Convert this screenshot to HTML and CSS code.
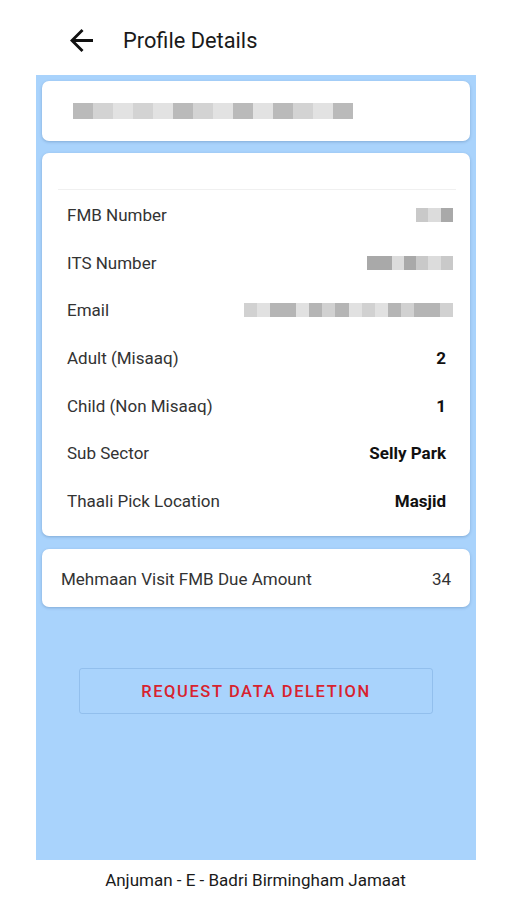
FILE: index.html
```html
<!DOCTYPE html>
<html lang="en">
  <head>
    <meta charset="UTF-8" />
    <meta name="viewport" content="width=device-width, initial-scale=1.0" />
    <title>Profile Details</title>
    <link rel="stylesheet" href="styles.css">
  </head>
  <body>
    <header class="topbar">
      <svg class="back" viewBox="4 4 16 16">
        <path d="M20 11H7.83l5.59-5.59L12 4l-8 8 8 8 1.41-1.41L7.83 13H20v-2z" fill="#111" />
      </svg>
      <h1>Profile Details</h1>
    </header>

    <main class="panel">
      <div class="card name-card">
        <div class="blur blur-name">
          <span class="p2"></span><span class="p1"></span><span class="p3"></span><span class="p1"></span><span class="p3"></span><span class="p2"></span><span class="p1"></span><span class="p3"></span><span class="p2"></span><span class="p3"></span><span class="p2"></span><span class="p1"></span><span class="p3"></span><span class="p2"></span>
        </div>
      </div>

      <div class="card details">
        <div class="divider"></div>
        <div class="rows">
          <div class="row">
            <span class="label">FMB Number</span>
            <div class="blur blur-fmb"><span class="p1"></span><span class="p3"></span><span class="p2"></span></div>
          </div>
          <div class="row">
            <span class="label">ITS Number</span>
            <div class="blur blur-its"><span class="p2"></span><span class="p2"></span><span class="p3"></span><span class="p2"></span><span class="p1"></span><span class="p3"></span><span class="p1"></span></div>
          </div>
          <div class="row">
            <span class="label">Email</span>
            <div class="blur blur-email"><span class="p1"></span><span class="p3"></span><span class="p2"></span><span class="p2"></span><span class="p3"></span><span class="p2"></span><span class="p1"></span><span class="p2"></span><span class="p3"></span><span class="p1"></span><span class="p3"></span><span class="p2"></span><span class="p1"></span><span class="p2"></span><span class="p2"></span><span class="p1"></span></div>
          </div>
          <div class="row">
            <span class="label">Adult (Misaaq)</span>
            <span class="value">2</span>
          </div>
          <div class="row">
            <span class="label">Child (Non Misaaq)</span>
            <span class="value">1</span>
          </div>
          <div class="row">
            <span class="label">Sub Sector</span>
            <span class="value">Selly Park</span>
          </div>
          <div class="row">
            <span class="label">Thaali Pick Location</span>
            <span class="value">Masjid</span>
          </div>
        </div>
      </div>

      <div class="card due">
        <span>Mehmaan Visit FMB Due Amount</span>
        <span>34</span>
      </div>

      <button class="delete">REQUEST DATA DELETION</button>
    </main>

    <footer class="footer">Anjuman - E - Badri Birmingham Jamaat</footer>
  </body>
</html>
```

FILE: styles.css
```css
* {
  box-sizing: border-box;
  font-family: Roboto, "Liberation Sans", sans-serif;
}

body {
  margin: 0;
  background: #fff;
  color: #222;
}

.topbar {
  height: 75px;
  display: flex;
  align-items: center;
  padding: 6px 0 0 70px;
}

.back {
  width: 23px;
  height: 23px;
}

.topbar h1 {
  margin: 0 0 0 30px;
  font-size: 21.8px;
  font-weight: 400;
  color: #1a1a1a;
}

.panel {
  margin: 0 31px 0 36px;
  height: 785px;
  background: #a9d3fc;
  padding: 6px 6px 0 6px;
  display: flex;
  flex-direction: column;
}

.card {
  background: #fff;
  border-radius: 7px;
  box-shadow: 0 1px 3px rgba(40, 80, 130, 0.3);
}

.name-card {
  height: 60px;
  display: flex;
  align-items: center;
  padding-left: 31px;
}

.blur {
  display: flex;
  height: 14px;
  filter: blur(0.6px);
}

.blur span {
  flex: 1;
}

.p1 { background: #c9c9c9; }
.p2 { background: #a9a9a9; }
.p3 { background: #dcdcdc; }

.blur-name {
  width: 280px;
  height: 16px;
  opacity: 0.8;
}

.blur-fmb { width: 37px; margin-right: -7px; }
.blur-its { width: 86px; margin-right: -7px; }
.blur-email { width: 209px; margin-right: -7px; opacity: 0.85; }

.details {
  margin-top: 12px;
  height: 383px;
  padding: 36px 24px 0 25px;
}

.divider {
  height: 1px;
  background: #f0f0f0;
  margin: 0 -10px 0 -9px;
}

.rows {
  padding-top: 1px;
}

.row {
  height: 47.7px;
  display: flex;
  align-items: center;
  justify-content: space-between;
  font-size: 17px;
}

.label {
  color: #333;
}

.value {
  font-weight: 700;
  color: #111;
}

.due {
  margin-top: 13px;
  height: 58px;
  display: flex;
  align-items: center;
  justify-content: space-between;
  padding: 2px 19px 0 19px;
  font-size: 17px;
  color: #333;
}

.delete {
  margin: 61px auto 0;
  width: 354px;
  height: 46px;
  background: transparent;
  border: 1px solid rgba(80, 130, 190, 0.25);
  border-radius: 3px;
  color: #d8222e;
  font-size: 16.5px;
  font-weight: 500;
  letter-spacing: 1.6px;
}

.footer {
  text-align: center;
  padding: 10px 0 0 4px;
  font-size: 17px;
  color: #1a1a1a;
}
```
